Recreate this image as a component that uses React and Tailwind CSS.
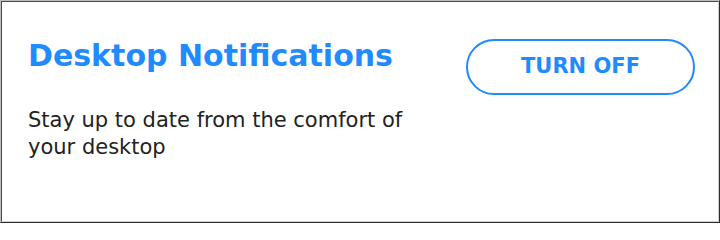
export default function App() {
  return (
    <div className="w-[720px] h-[223px] border border-t-[#bdbdbd] border-l-[#bdbdbd] border-b-[#2e2e2e] border-r-[#2e2e2e]">
      <div
        className="h-full border border-t-[#4a4a4a] border-l-[#4a4a4a] border-b-[#cfcfcf] border-r-[#cfcfcf] bg-white flex justify-between pl-[26px] pr-[23px] pt-[36px]"
        style={{ fontFamily: "'DejaVu Sans', 'Noto Sans', sans-serif" }}
      >
        <div className="flex flex-col">
          <h1 className="text-[30px] leading-[36px] font-bold text-[#1f8bff]">
            Desktop Notifications
          </h1>
          <p className="mt-[33px] text-[21px] leading-[27px] text-[#222] w-[400px]">
            Stay up to date from the comfort of your desktop
          </p>
        </div>
        <button className="mt-[1px] w-[229px] h-[56px] rounded-full border-2 border-[#1f8bff] text-[#1f8bff] text-[21px] font-bold">
          TURN OFF
        </button>
      </div>
    </div>
  );
}
